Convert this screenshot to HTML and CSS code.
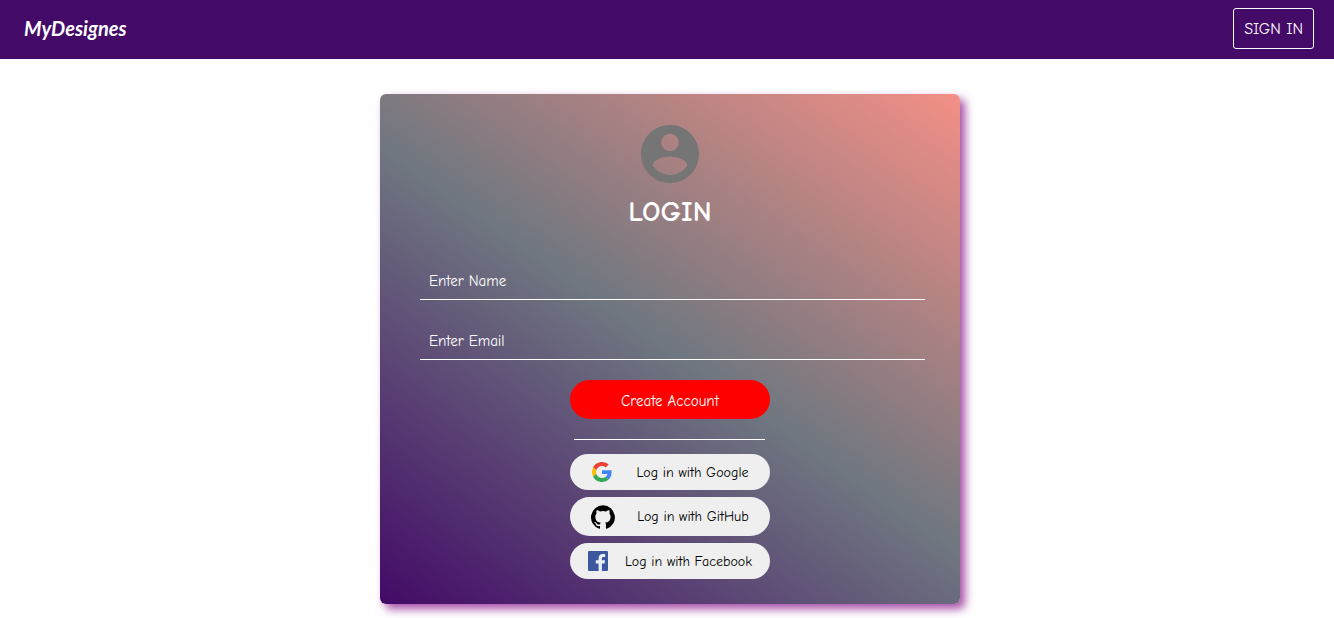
FILE: index.html
```html
<!DOCTYPE html>
<html lang="en">
<head>
<meta charset="utf-8">
<meta name="viewport" content="width=device-width, initial-scale=1">
<title>MyDesignes</title>
<link rel="stylesheet" href="styles.css">
</head>
<body>
<header class="topbar">
  <a class="brand" href="#">MyDesignes</a>
  <button class="signin" type="button">SIGN IN</button>
</header>
<main class="page">
  <form class="card">
    <svg class="avatar" viewBox="2 2 20 20" aria-hidden="true"><path fill="#757575" d="M12 2C6.480 2 2 6.480 2 12s4.480 10 10 10 10-4.480 10-10S17.520 2 12 2zm0 3c1.660 0 3 1.340 3 3s-1.340 3-3 3-3-1.340-3-3 1.340-3 3-3zm0 14.200c-2.500 0-4.710-1.280-6-3.220.030-1.990 4-3.080 6-3.080 1.990 0 5.970 1.090 6 3.080-1.290 1.940-3.500 3.220-6 3.220z"/></svg>
    <h1 class="title">LOGIN</h1>
    <input class="field" type="text" placeholder="Enter Name" aria-label="Enter Name">
    <input class="field" type="email" placeholder="Enter Email" aria-label="Enter Email">
    <button class="create" type="button">Create Account</button>
    <hr class="rule">
    <div class="socials">
      <button class="social google" type="button">
        <svg class="icon" viewBox="0 0 48 48" aria-hidden="true"><path fill="#ea4335" d="M24 9.500c3.540 0 6.710 1.220 9.210 3.600l6.850-6.850C35.900 2.380 30.470 0 24 0 14.620 0 6.510 5.380 2.560 13.220l7.980 6.190C12.430 13.720 17.740 9.500 24 9.500z"/><path fill="#4285f4" d="M46.980 24.550c0-1.570-.150-3.090-.380-4.550H24v9.020h12.940c-.580 2.960-2.260 5.480-4.780 7.180l7.730 6c4.510-4.180 7.090-10.360 7.090-17.650z"/><path fill="#fbbc05" d="M10.530 28.590c-.480-1.450-.760-2.990-.760-4.590s.270-3.140.760-4.590l-7.980-6.190C.920 16.460 0 20.120 0 24c0 3.880.920 7.540 2.560 10.780l7.970-6.190z"/><path fill="#34a853" d="M24 48c6.480 0 11.930-2.130 15.890-5.810l-7.730-6c-2.150 1.450-4.920 2.300-8.160 2.300-6.260 0-11.570-4.220-13.470-9.910l-7.980 6.190C6.510 42.620 14.620 48 24 48z"/></svg>
        <span>Log in with Google</span>
      </button>
      <button class="social github" type="button">
        <svg class="icon" viewBox="0 0 24 24" aria-hidden="true"><path fill="#000" d="M12 .3a12 12 0 0 0-3.800 23.380c.6.120.830-.260.830-.570L9 21.070c-3.340.720-4.040-1.610-4.040-1.610-.550-1.390-1.340-1.760-1.340-1.760-1.080-.740.090-.730.090-.730 1.200.090 1.830 1.240 1.830 1.240 1.080 1.830 2.810 1.300 3.500 1 .1-.780.420-1.310.760-1.610-2.670-.3-5.470-1.330-5.470-5.930 0-1.310.470-2.380 1.240-3.220-.140-.3-.540-1.520.1-3.180 0 0 1-.320 3.300 1.230a11.500 11.500 0 0 1 6 0c2.280-1.550 3.290-1.230 3.290-1.230.640 1.660.240 2.880.120 3.180a4.650 4.650 0 0 1 1.230 3.220c0 4.610-2.800 5.630-5.480 5.920.420.360.810 1.100.810 2.220l-.010 3.290c0 .310.2.690.820.570A12 12 0 0 0 12 .3"/></svg>
        <span>Log in with GitHub</span>
      </button>
      <button class="social facebook" type="button">
        <svg class="icon" viewBox="0 0 20 20" aria-hidden="true"><rect width="20" height="20" rx="1" fill="#3b579d"/><path fill="#e9edf5" d="M10.600 20v-7.600H7.800v-3.200h2.800V7.200c0-2.700 1.600-4.300 4.100-4.300 1.100 0 1.900.1 2.400.2v3h-1.700c-1.300 0-1.500.6-1.500 1.500v1.600h3.100l-.4 3.200h-2.700V20z"/></svg>
        <span>Log in with Facebook</span>
      </button>
    </div>
  </form>
</main>
</body>
</html>
```
FILE: styles.css
```css
* {
  box-sizing: border-box;
}

body {
  margin: 0;
  background: #fff;
  font-family: "Comic Sans MS", "Comic Neue", "Open Sans", sans-serif;
}

button,
input {
  font: inherit;
  font-size: 15px;
}

button {
  cursor: pointer;
}

.topbar {
  display: flex;
  align-items: center;
  justify-content: space-between;
  padding: 8px 20px 10px 24px;
  background: #430a67;
}

.brand {
  color: #fff;
  font-family: "Brush Script MT", Lato, sans-serif;
  font-size: 20px;
  font-style: italic;
  font-weight: 700;
  line-height: 24px;
  padding-bottom: 2px;
  text-decoration: none;
}

.signin {
  padding: 11px 10px 9px;
  border: 1px solid #fff;
  border-radius: 3px;
  background: transparent;
  color: #fff;
  font-size: 16px;
  line-height: 19px;
}

.page {
  display: flex;
  justify-content: center;
  padding: 35px 0 14px 6px;
}

.card {
  display: flex;
  flex-direction: column;
  align-items: center;
  width: 100%;
  max-width: 580px;
  padding: 31px 35px 25px 40px;
  border-radius: 6px;
  background: linear-gradient(35deg, #430a67, #6f7780, #f48f86);
  box-shadow: 5px 5px 10px #800080b3;
}

.avatar {
  width: 58px;
  height: 58px;
  margin-right: 5px;
}

.title {
  margin: 12px 5px 31px 0;
  color: #fff;
  font-size: 29px;
  font-weight: 700;
  line-height: 34px;
}

.field {
  width: 100%;
  height: 40px;
  margin-bottom: 20px;
  padding: 2px 9px 0;
  border: 0;
  border-bottom: 1px solid #fff;
  background: transparent;
  color: #fff;
}

.field::placeholder {
  color: #fff;
  opacity: 1;
}

.create {
  width: 200px;
  height: 39px;
  margin-right: 5px;
  padding: 2px 0 0;
  border: 0;
  border-radius: 20px;
  background: #f00;
  color: #fff;
}

.rule {
  width: 191px;
  margin: 20px 6px 14px 0;
  border: 0;
  border-top: 1px solid #fff;
}

.socials {
  display: flex;
  flex-direction: column;
  gap: 7px;
  width: 200px;
  margin-right: 5px;
}

.social {
  display: flex;
  align-items: center;
  justify-content: center;
  height: 36px;
  padding: 0;
  border: 0;
  border-radius: 20px;
  background: #efefef;
  color: #000;
  font-size: 14px;
}

.icon {
  width: 20px;
  height: 20px;
}

.google {
  gap: 25px;
}

.github {
  gap: 22px;
  height: 39px;
}

.github .icon {
  width: 24px;
  height: 24px;
}

.facebook {
  gap: 17px;
}
```
